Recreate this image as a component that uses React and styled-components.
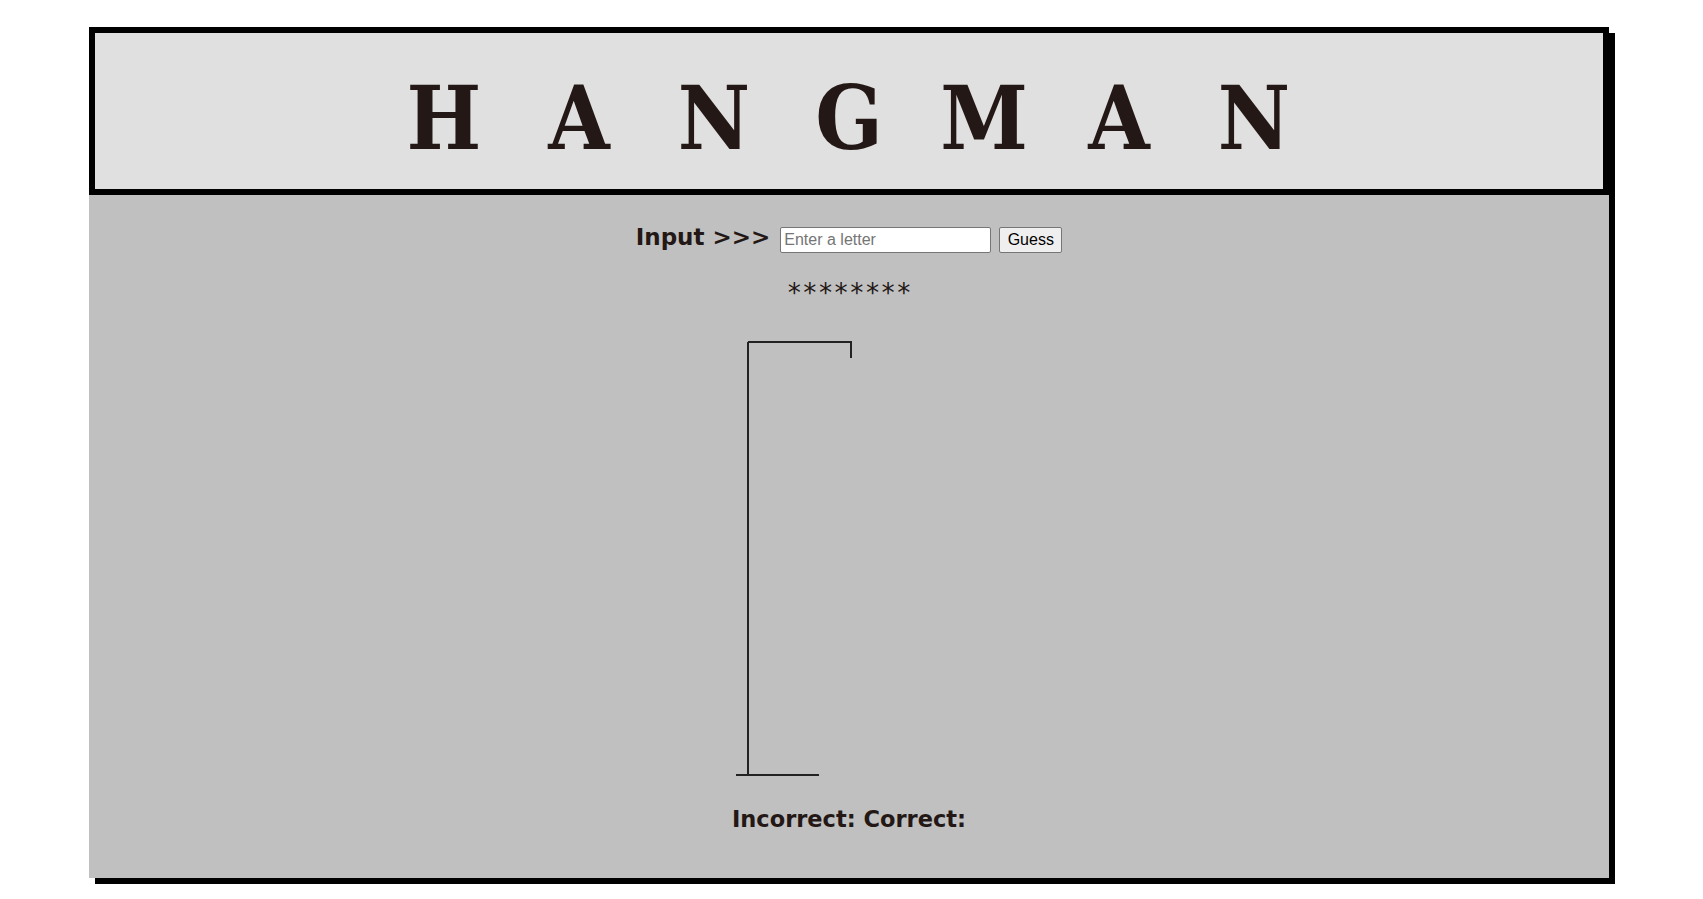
import React from 'react';
import styled, { createGlobalStyle } from 'styled-components';

const GlobalStyle = createGlobalStyle`
  body {
    margin: 0;
    padding: 0;
    background: #ffffff;
    font-family: 'DejaVu Sans', Verdana, sans-serif;
  }
`;

// padding-bottom keeps the board's drop shadow inside the document
const Page = styled.div`
  padding: 27px 0 22px 89px;
`;

const Board = styled.div`
  width: 1520px;
  background: #c0c0c0;
  box-shadow: 6px 6px 0 #000;
`;

const Header = styled.header`
  height: 168px;
  padding-top: 13px;
  box-sizing: border-box;
  border: 6px solid #000;
  background: #e0e0e0;
  display: flex;
  align-items: center;
  justify-content: center;
`;

const Title = styled.h1`
  margin: 0;
  display: flex;
  font-family: 'DejaVu Serif Condensed', 'DejaVu Serif', serif;
  font-stretch: condensed;
  font-weight: bold;
  font-size: 88px;
  line-height: 1;
  color: #231815;
`;

const Letter = styled.span`
  width: 135px;
  text-align: center;
`;

const Main = styled.main`
  display: flex;
  flex-direction: column;
  align-items: center;
  padding: 29px 0 46px;
  color: #231815;
`;

const InputRow = styled.form`
  display: flex;
  align-items: flex-start;
  margin: 0;
`;

const Label = styled.label`
  font-weight: bold;
  font-size: 23px;
  margin-right: 10px;
`;

const LetterInput = styled.input`
  width: 211px;
  height: 26px;
  box-sizing: border-box;
  margin-top: 3px;
  padding: 1px 3px;
  border: 1px solid #767676;
  border-radius: 2px;
  background: #fff;
  font-family: 'Liberation Sans', Arial, sans-serif;
  font-size: 16px;
  &::placeholder {
    color: #757575;
  }
`;

const GuessButton = styled.button`
  width: 63px;
  height: 26px;
  margin: 3px 0 0 8px;
  padding: 0;
  border: 1px solid #767676;
  border-radius: 2px;
  background: #efefef;
  color: #000;
  font-family: 'Liberation Sans', Arial, sans-serif;
  font-size: 16px;
`;

const Word = styled.div`
  margin-top: 25px;
  font-family: 'DejaVu Sans Mono', 'Courier New', monospace;
  font-size: 26px;
  line-height: 30px;
  color: #231815;
`;

const Gallows = styled.svg`
  display: block;
  margin-top: 22px;
`;

const Tally = styled.p`
  margin: 26px 0 0;
  font-weight: bold;
  font-size: 22.5px;
`;

export default function App() {
  const title = 'HANGMAN'.split('');
  return (
    <>
      <GlobalStyle />
      <Page>
        <Board>
          <Header>
            <Title>
              {title.map((ch, i) => (
                <Letter key={i}>{ch}</Letter>
              ))}
            </Title>
          </Header>
          <Main>
            <InputRow onSubmit={(e) => e.preventDefault()}>
              <Label htmlFor="guess">Input &gt;&gt;&gt;</Label>
              <LetterInput id="guess" type="text" placeholder="Enter a letter" />
              <GuessButton type="submit">Guess</GuessButton>
            </InputRow>
            <Word>********</Word>
            <Gallows width="300" height="450" viewBox="0 0 300 450">
              <g stroke="#222" strokeWidth="2" fill="none">
                <line x1="49" y1="12" x2="49" y2="445" />
                <line x1="49" y1="12" x2="153" y2="12" />
                <line x1="152" y1="12" x2="152" y2="28" />
                <line x1="37" y1="445" x2="120" y2="445" />
              </g>
            </Gallows>
            <Tally>Incorrect: Correct:</Tally>
          </Main>
        </Board>
      </Page>
    </>
  );
}
